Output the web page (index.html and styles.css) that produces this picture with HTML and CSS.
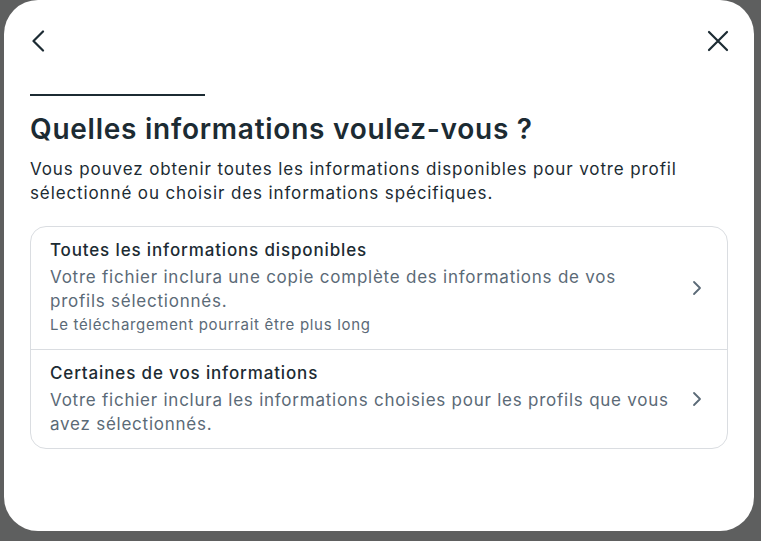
FILE: index.html
```html
<!DOCTYPE html>
<html lang="fr">
<head>
<meta charset="utf-8">
<title>Quelles informations voulez-vous ?</title>
<link rel="stylesheet" href="styles.css">
</head>
<body>
<div class="backdrop">
  <div class="modal">
    <div class="modal-header">
      <button class="icon-btn back" aria-label="Retour">
        <svg width="14" height="22" viewBox="0 0 14 22"><path d="M12 1.5 2.5 11 12 20.5" fill="none" stroke="#1c2b33" stroke-width="2.2" stroke-linecap="round" stroke-linejoin="round"/></svg>
      </button>
      <button class="icon-btn" aria-label="Fermer">
        <svg width="22" height="22" viewBox="0 0 22 22"><path d="M2 2 20 20M20 2 2 20" fill="none" stroke="#1c2b33" stroke-width="2.2" stroke-linecap="round"/></svg>
      </button>
    </div>
    <div class="rule"></div>
    <h1 class="title">Quelles informations voulez-vous ?</h1>
    <p class="lead">Vous pouvez obtenir toutes les informations disponibles pour votre profil sélectionné ou choisir des informations spécifiques.</p>
    <div class="options">
      <div class="option">
        <div class="option-text">
          <div class="option-title">Toutes les informations disponibles</div>
          <div class="option-desc">Votre fichier inclura une copie complète des informations de vos profils sélectionnés.</div>
          <div class="option-note">Le téléchargement pourrait être plus long</div>
        </div>
        <svg class="chev" width="10" height="16" viewBox="0 0 10 16"><path d="M2 2 8 8 2 14" fill="none" stroke="#5b6a77" stroke-width="1.8" stroke-linecap="round" stroke-linejoin="round"/></svg>
      </div>
      <div class="option">
        <div class="option-text">
          <div class="option-title">Certaines de vos informations</div>
          <div class="option-desc">Votre fichier inclura les informations choisies pour les profils que vous avez sélectionnés.</div>
        </div>
        <svg class="chev" width="10" height="16" viewBox="0 0 10 16"><path d="M2 2 8 8 2 14" fill="none" stroke="#5b6a77" stroke-width="1.8" stroke-linecap="round" stroke-linejoin="round"/></svg>
      </div>
    </div>
  </div>
</div>
</body>
</html>
```
FILE: styles.css
```css
html, body {
  margin: 0;
  padding: 0;
}
body {
  background: #5e5f5f;
  font-family: Inter, "Noto Sans", Roboto, sans-serif;
  color: #1c2b33;
  width: 761px;
  height: 541px;
  overflow: hidden;
}
.backdrop {
  padding-left: 4px;
}
.modal {
  width: 750px;
  height: 531px;
  box-sizing: border-box;
  background: #fff;
  border-radius: 34px;
  padding: 20px 26px 0 26px;
}
.modal-header {
  display: flex;
  justify-content: space-between;
  align-items: center;
  height: 42px;
}
.icon-btn {
  background: none;
  border: 0;
  padding: 0;
  width: 24px;
  height: 24px;
  display: flex;
  align-items: center;
  justify-content: center;
  margin-right: -2px;
}
.icon-btn.back {
  justify-content: flex-start;
  padding-left: 1px;
  margin-right: 0;
}
.rule {
  width: 175px;
  height: 2px;
  background: #1c2b33;
  margin-top: 32px;
}
.title {
  margin: 16px 0 0;
  font-size: 28px;
  font-weight: 600;
  line-height: 34px;
  letter-spacing: 0.75px;
}
.lead {
  margin: 11px 0 0;
  font-size: 17px;
  line-height: 24px;
  letter-spacing: 0.88px;
}
.options {
  margin-top: 21px;
  border: 1px solid #dadde1;
  border-radius: 16px;
}
.option {
  display: flex;
  align-items: center;
  gap: 20px;
  padding: 11px 25px 12px 19px;
}
.option + .option {
  border-top: 1px solid #dadde1;
}
.option-text {
  flex: 1;
}
.option-title {
  font-size: 17px;
  line-height: 24px;
  font-weight: 500;
  letter-spacing: 0.85px;
  margin-bottom: 3px;
}
.option-desc {
  font-size: 17px;
  line-height: 24px;
  letter-spacing: 0.76px;
  color: #5b6a77;
}
.option-note {
  font-size: 15px;
  line-height: 24px;
  letter-spacing: 0.68px;
  color: #5b6a77;
}
.chev {
  flex: none;
}
```
